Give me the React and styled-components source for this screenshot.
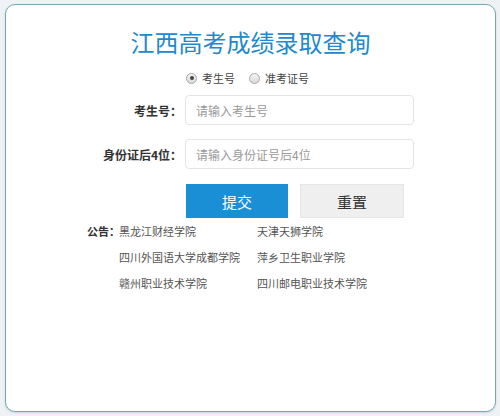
import React, { useState } from 'react';
import styled, { createGlobalStyle } from 'styled-components';

const GlobalStyle = createGlobalStyle`
  html, body {
    margin: 0;
    padding: 0;
    background-color: #eef2f4;
    font-family: "Noto Sans CJK SC", "Noto Sans", sans-serif;
  }
  * { box-sizing: border-box; }
`;

const schools = [
  '黑龙江财经学院',
  '天津天狮学院',
  '四川外国语大学成都学院',
  '萍乡卫生职业学院',
  '赣州职业技术学院',
  '四川邮电职业技术学院'
];

export default function App() {
  const [modo, setModo] = useState('ksh');

  return (
    <>
      <GlobalStyle />
      <Pagina>
        <Tarjeta>
          <Titulo>江西高考成绩录取查询</Titulo>
          <Formulario>
            <span />
            <CajaRadios>
              <OpcionRadio onClick={() => setModo('ksh')}>
                <Circulo $activo={modo === 'ksh'} />
                考生号
              </OpcionRadio>
              <OpcionRadio onClick={() => setModo('zkzh')}>
                <Circulo $activo={modo === 'zkzh'} />
                准考证号
              </OpcionRadio>
            </CajaRadios>

            <Etiqueta>{modo === 'ksh' ? '考生号：' : '准考证号：'}</Etiqueta>
            <Entrada
              type='text'
              placeholder={modo === 'ksh' ? '请输入考生号' : '请输入准考证号'}
            />

            <Etiqueta>身份证后4位：</Etiqueta>
            <Entrada type='text' placeholder='请输入身份证号后4位' />

            <span />
            <CajaBotones>
              <Boton type='button' $primario>提交</Boton>
              <Boton type='button'>重置</Boton>
            </CajaBotones>
          </Formulario>

          <Aviso>
            <TituloAviso>公告：</TituloAviso>
            <ListaAviso>
              {schools.map((s) => (
                <ItemAviso key={s}>{s}</ItemAviso>
              ))}
            </ListaAviso>
          </Aviso>
        </Tarjeta>
      </Pagina>
    </>
  );
}

const Pagina = styled.div`
  width: 500px;
  height: 416px;
  padding: 4px 4px 4px 5px;
`;

const Tarjeta = styled.div`
  height: 408px;
  background-color: #ffffff;
  border: 1px solid #7aa6b6;
  border-radius: 10px;
  box-shadow: 0 1px 2px rgba(90, 130, 150, 0.25);
  padding-top: 21px;
  display: flex;
  flex-direction: column;
  align-items: center;
`;

const Titulo = styled.h1`
  margin: 0;
  font-size: 24px;
  line-height: 32px;
  font-weight: 400;
  color: #2189cc;
  letter-spacing: 0;
`;

const Formulario = styled.div`
  margin-top: 10px;
  width: 327px;
  display: grid;
  grid-template-columns: 95px 229px;
  column-gap: 3px;
  align-items: center;
`;

const CajaRadios = styled.div`
  height: 20px;
  display: flex;
  align-items: center;
  gap: 14px;
  margin-bottom: 7px;
  padding-left: 1px;
`;

const OpcionRadio = styled.label`
  display: flex;
  align-items: center;
  gap: 5px;
  font-size: 11px;
  color: #444;
  cursor: pointer;
`;

const Circulo = styled.span`
  width: 11px;
  height: 11px;
  border-radius: 50%;
  border: 1px solid #a9a9a9;
  background: linear-gradient(#f4f4f4, #d9d9d9);
  display: flex;
  align-items: center;
  justify-content: center;
  &::after {
    content: '';
    width: 4px;
    height: 4px;
    border-radius: 50%;
    background-color: #444;
    display: ${(p) => (p.$activo ? 'block' : 'none')};
  }
`;

const Etiqueta = styled.div`
  text-align: right;
  font-size: 12px;
  font-weight: 700;
  color: #333;
  white-space: nowrap;
  margin-bottom: 14px;
`;

const Entrada = styled.input`
  height: 30px;
  width: 229px;
  border: 1px solid #e4e4e4;
  border-radius: 4px;
  outline: none;
  padding: 0 10px;
  font-family: inherit;
  font-size: 12px;
  color: #333;
  margin-bottom: 14px;
  &::placeholder {
    color: #9a9a9a;
  }
`;

const CajaBotones = styled.div`
  display: flex;
  gap: 12px;
  padding-left: 1px;
  margin-top: 1px;
`;

const Boton = styled.button`
  width: ${(p) => (p.$primario ? '102px' : '104px')};
  height: 34px;
  border: ${(p) => (p.$primario ? 'none' : '1px solid #e6e6e6')};
  background-color: ${(p) => (p.$primario ? '#1a8fd6' : '#efefef')};
  color: ${(p) => (p.$primario ? '#ffffff' : '#333333')};
  font-family: inherit;
  font-size: 15px;
  cursor: pointer;
`;

const Aviso = styled.div`
  width: 327px;
  display: flex;
`;

const TituloAviso = styled.div`
  width: 32px;
  flex-shrink: 0;
  font-size: 11px;
  font-weight: 700;
  color: #333;
  line-height: 26px;
  white-space: nowrap;
`;

const ListaAviso = styled.div`
  display: grid;
  grid-template-columns: 138px 1fr;
`;

const ItemAviso = styled.div`
  font-size: 11px;
  line-height: 26px;
  color: #555;
  white-space: nowrap;
`;
